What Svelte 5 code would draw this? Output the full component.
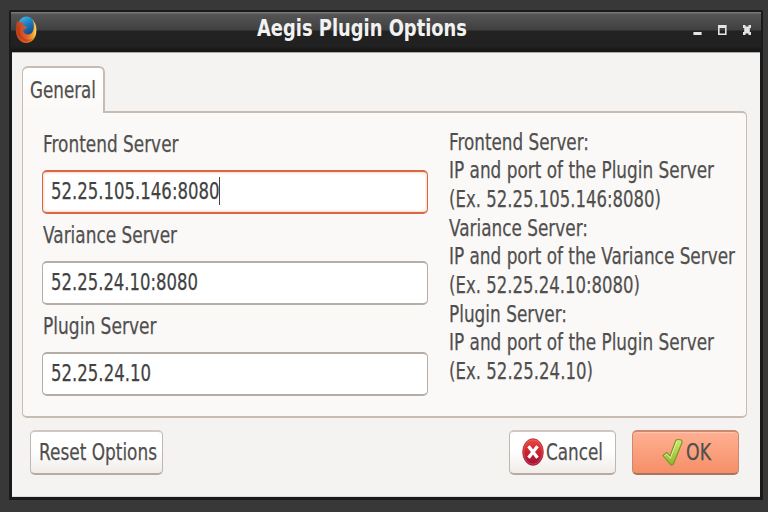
<script>
  const fields = [
    { label: 'Frontend Server', lw: 135.5, value: '52.25.105.146:8080', vw: 168.5, focused: true },
    { label: 'Variance Server', lw: 134, value: '52.25.24.10:8080', vw: 147 },
    { label: 'Plugin Server', lw: 113.5, value: '52.25.24.10', vw: 100 },
  ];
  const help = [
    ['Frontend Server:', 140],
    ['IP and port of the Plugin Server', 265],
    ['(Ex. 52.25.105.146:8080)', 212],
    ['Variance Server:', 139],
    ['IP and port of the Variance Server', 286],
    ['(Ex. 52.25.24.10:8080)', 191],
    ['Plugin Server:', 118],
    ['IP and port of the Plugin Server', 265],
    ['(Ex. 52.25.24.10)', 144],
  ];
</script>

{#snippet line(text, width)}
  <svg class="line" {width} height="28"><text x="0" y="22" textLength={width} lengthAdjust="spacingAndGlyphs">{text}</text></svg>
{/snippet}

<div class="desktop">
  <div class="window">
    <header>
      <svg class="fox" width="23" height="28" viewBox="0 0 23 28">
        <defs>
          <linearGradient id="globe" x1="0" y1="0" x2="0.5" y2="1"><stop offset="0" stop-color="#4cc5ee" /><stop offset=".5" stop-color="#1a78bd" /><stop offset="1" stop-color="#123b78" /></linearGradient>
          <linearGradient id="fur" x1="0" y1="0" x2="1" y2="0"><stop offset="0" stop-color="#b8401c" /><stop offset=".55" stop-color="#e4602a" /><stop offset=".85" stop-color="#f3a52c" /><stop offset="1" stop-color="#fbe56c" /></linearGradient>
        </defs>
        <ellipse cx="11.5" cy="12.2" rx="9.3" ry="11.7" fill="url(#globe)" />
        <path d="M2.3 4.5 L3.8 6.8 Q6 5.6 8.6 7 Q7.8 8.8 8.6 10 L12 10.8 Q11.6 12.8 8.6 13.6 Q7.6 16.2 10.6 18 Q13.6 19.4 16.2 17.6 Q19 14.8 18.8 9.5 Q18.6 5.5 16.8 3 Q21.4 7 21.4 14 C21.4 22 17 27 11 27 C5 27 .8 21.5 .8 14 Q.8 8.4 2.3 4.5Z" fill="url(#fur)" />
        <path d="M2 11 Q1.5 22 10.5 25.5 Q17 26 20 20 Q15 26.5 9 22 Q3.5 18 4.8 11Z" fill="#b9341c" opacity=".55" />
      </svg>
      <h1><svg class="line" width="210" height="28"><text x="0" y="22" textLength="210" lengthAdjust="spacingAndGlyphs">Aegis Plugin Options</text></svg></h1>
      <svg class="controls" width="60" height="14" viewBox="0 0 60 14">
        <rect x=".4" y="8" width="8.2" height="3" fill="#e4e4e4" />
        <path d="M25 1h8.6v10H25z M26.6 4v5.5H32V4z" fill="#e4e4e4" fill-rule="evenodd" />
        <path d="M50 1h2.5v1.5h3V1H58v3h-1.2v4H58v3h-2.5V9.5h-3V11H50V8h1.2V4H50z" fill="#e4e4e4" />
      </svg>
    </header>

    <main>
      <div class="tabs"><div class="tab">{@render line('General', 66)}</div></div>
      <section class="panel">
        <div class="fields">
          {#each fields as f}
            <div class="field">
              <div class="label">{@render line(f.label, f.lw)}</div>
              <div class="input" class:focused={f.focused}>
                {@render line(f.value, f.vw)}
                {#if f.focused}<i class="caret"></i>{/if}
              </div>
            </div>
          {/each}
        </div>
        <div class="help">
          {#each help as [text, w]}
            <div class="row">{@render line(text, w)}</div>
          {/each}
        </div>
      </section>

      <footer>
        <div class="button reset">{@render line('Reset Options', 118)}</div>
        <div class="button cancel">
          <svg width="22" height="28" viewBox="0 0 22 28">
            <defs><linearGradient id="stop" x1="0" y1="0" x2="0" y2="1"><stop offset="0" stop-color="#ee4a40" /><stop offset=".5" stop-color="#cc222c" /><stop offset="1" stop-color="#9c1240" /></linearGradient></defs>
            <ellipse cx="11" cy="14" rx="10.3" ry="13.3" fill="url(#stop)" stroke="#b32030" stroke-width=".8" />
            <ellipse cx="11" cy="14" rx="9.3" ry="12.2" fill="none" stroke="#ef8580" stroke-width=".7" opacity=".6" />
            <path d="M6.5 8.2 L15.5 19.8 M15.5 8.2 L6.5 19.8" stroke="#fff" stroke-width="3.3" />
          </svg>
          {@render line('Cancel', 57)}
        </div>
        <div class="button ok">
          <svg width="21" height="29" viewBox="0 0 21 29">
            <defs><linearGradient id="tick" x1="0" y1="0" x2="0" y2="1"><stop offset="0" stop-color="#d4e872" /><stop offset="1" stop-color="#8eb52a" /></linearGradient></defs>
            <path d="M.8 17.5 L5 14.5 L8 18 L14 2 Q16.5 .8 19.8 2.3 L20 4.5 L11.4 26 L9.5 27.4 Z" fill="url(#tick)" stroke="#74962a" stroke-width="1.1" stroke-linejoin="round" />
            <path d="M2.4 17.8 L4.8 16.1 L8.3 20.3 L15 3" fill="none" stroke="#e3f09c" stroke-width=".9" />
          </svg>
          {@render line('OK', 25)}
        </div>
      </footer>
    </main>
  </div>
</div>

<style>
  .desktop {
    width: 768px; height: 512px; box-sizing: border-box; padding: 10px 5px 12px 9px;
    background: #383838;
    font-family: "DejaVu Sans", sans-serif; font-size: 23px;
  }
  .window {
    height: 490px; box-sizing: border-box; padding: 2px 3px 3px;
    background: #1a1a1a; border-radius: 2px 2px 0 0;
    display: flex; flex-direction: column;
  }
  header {
    height: 40px; flex: none; display: flex; align-items: flex-start; box-sizing: border-box;
    margin: 0 -1px; padding-left: 4px;
    background: linear-gradient(#777 0, #777 1px, #555 2px, #404040 18px, #222 19px, #212121 34px, #181818 38px);
  }
  .fox { margin-top: 4px; }
  h1 { margin: 2.3px 0 0 218.5px; width: 210px; font-size: 22.5px; font-weight: bold; }
  .controls { margin: 12px 0 0 226.5px; }
  main {
    flex: 1; box-sizing: border-box; padding: 14px 13px 0 10px;
    background: #f4f3f2; border-top: 1px solid #aaa; border-bottom: 1px solid #dedddd;
    display: flex; flex-direction: column;
  }
  .line { display: block; flex: none; overflow: visible; }
  .line text { fill: #504f4e; stroke: #504f4e; stroke-width: .25px; }
  h1 .line text { fill: #f2f2f2; stroke: none; }
  .tabs { height: 45px; flex: none; display: flex; margin-top: -1px; }
  .tab {
    width: 83px; height: 47px; box-sizing: border-box; padding: 7.5px 0 0 7px; z-index: 1; position: relative;
    border: solid #c8bcb1; border-width: 2px 2px 0 1.5px; border-radius: 6px 6px 0 0;
    background: linear-gradient(#fff, #faf9f7);
  }
  .panel {
    height: 307px; flex: none; box-sizing: border-box; display: flex; padding: 16.6px 0 0 19px;
    border: 2px solid #c8bcb1; border-left-width: 1px; border-right-width: 1px; border-radius: 0 5px 5px 5px;
    background: #faf9f7;
  }
  .fields { width: 386px; flex: none; }
  .field { height: 91px; }
  .label { height: 40.4px; padding-left: 1px; box-sizing: border-box; }
  .input {
    height: 44px; box-sizing: border-box; display: flex; padding: 5px 0 0 8px;
    border: 1.5px solid #b6ada5; border-top-width: 2px; border-bottom-width: 2px; border-radius: 5px; background: #fff;
  }
  .input .line text { fill: #424242; stroke: #424242; }
  .input.focused { border-color: #d76745; box-shadow: inset 0 0 0 1.5px #fde5dc; }
  .caret { width: 1.5px; height: 28px; margin-left: -1px; background: #444; }
  .help { margin: -1.9px 0 0 21px; }
  .row { height: 28.65px; }
  footer { display: flex; padding: 12px 8px 0 8px; }
  .button {
    height: 45px; box-sizing: border-box; display: flex; align-items: flex-start; padding-top: 6px;
    border: 1.5px solid #c0b6ad; border-top: 2px solid #d0c8c0; border-bottom: 2px solid #b7aaa1; border-radius: 5px;
    background: linear-gradient(#fff 45%, #f0ece9);
  }
  .reset { width: 133px; padding-left: 8px; }
  .cancel { width: 107px; margin-left: 346px; padding-left: 12px; gap: 2px; }
  .ok {
    width: 107px; margin-left: 16px; padding-left: 29px; gap: 3px;
    border-color: #c98b70; border-bottom-color: #a9745f; background: linear-gradient(#ffaf92, #f58f68);
    box-shadow: inset 0 1px 0 #ffc4ad;
  }
</style>
